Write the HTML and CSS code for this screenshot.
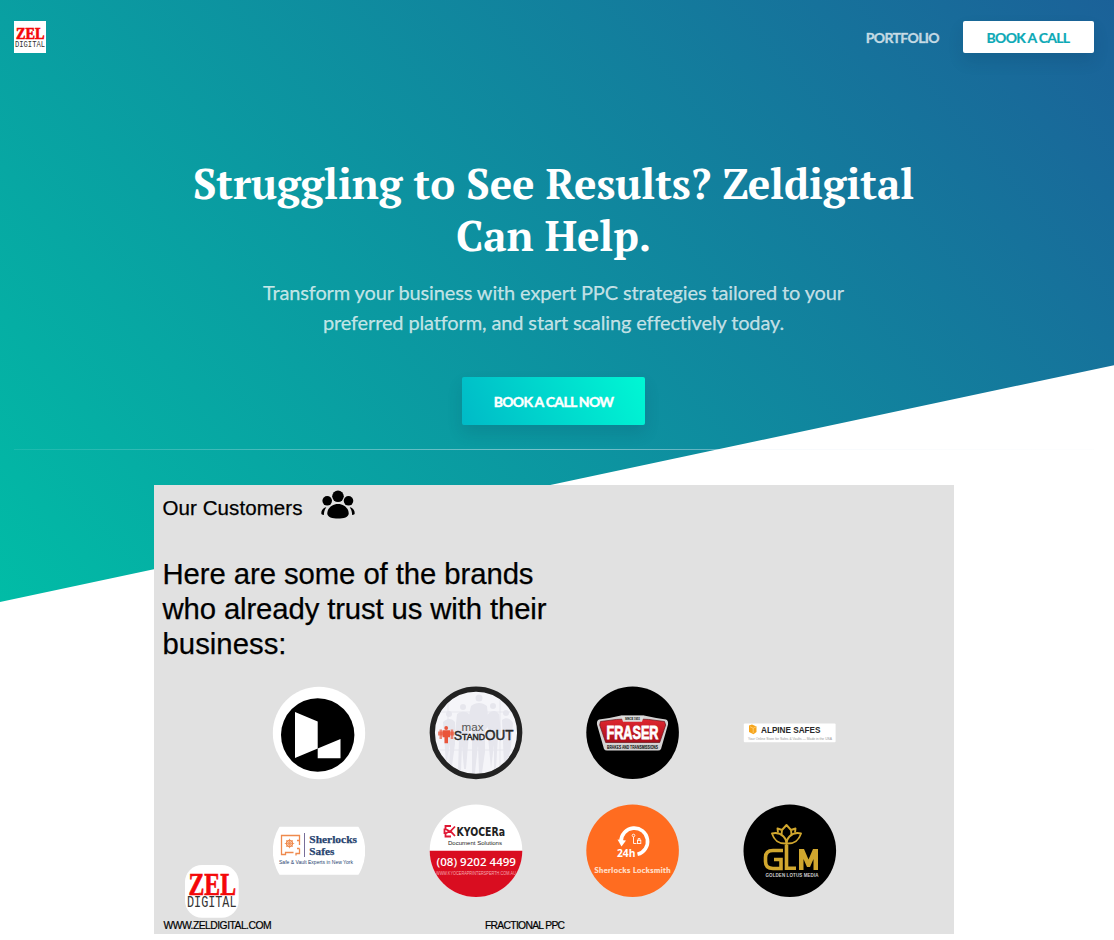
FILE: index.html
```html
<!DOCTYPE html>
<html lang="en">
<head>
<meta charset="utf-8">
<title>Zeldigital</title>
<link rel="stylesheet" href="styles.css">
</head>
<body>
<div class="page">
  <header class="site-header">
    <a class="brand" href="#" aria-label="Zel Digital">
      <svg width="32" height="32" viewBox="0 0 32 32">
        <rect width="32" height="32" fill="#fff"/>
        <text class="zel" x="2" y="17.800" font-size="17" textLength="28.500" lengthAdjust="spacingAndGlyphs">ZEL</text>
        <text class="digital" x="1" y="26" font-size="9" textLength="30" lengthAdjust="spacingAndGlyphs">DIGITAL</text>
      </svg>
    </a>
    <nav class="nav">
      <a class="nav-link" href="#">PORTFOLIO</a>
      <a class="button button-light" href="#">BOOK A CALL</a>
    </nav>
  </header>
  <main class="hero">
    <h1><span>Struggling to See Results? Zeldigital</span> <span>Can Help.</span></h1>
    <p>Transform your business with expert PPC strategies tailored to your preferred platform, and start scaling effectively today.</p>
    <a class="button button-primary" href="#">BOOK A CALL NOW</a>
    <div class="divider"></div>
    <svg class="customers" width="800" height="449" viewBox="154 485 800 449">
      <defs>
        <clipPath id="max-clip"><circle cx="476" cy="732.8" r="41"/></clipPath>
        <clipPath id="safes-clip"><rect x="273" y="826.8" width="92" height="48"/></clipPath>
        <clipPath id="kyo-clip"><circle cx="476" cy="850.7" r="46.3"/></clipPath>
        <linearGradient id="badge" x1="0" y1="0" x2="0" y2="1"><stop offset="0" stop-color="#e02730"/><stop offset="1" stop-color="#a80f1b"/></linearGradient>
      </defs>
      <rect x="154" y="485" width="800" height="449" fill="#e1e1e1"/>
      <text x="162.5" y="515" font-size="20.5" textLength="140" stroke="#000" stroke-width=".25">Our Customers</text>
      <g>
        <circle cx="327.2" cy="500.8" r="4.8"/><circle cx="348.5" cy="500.8" r="4.8"/>
        <circle cx="338" cy="496.3" r="5.8"/>
        <path d="M327.3 513.4c0-5.200 4.800-9.500 10.700-9.500s10.700 4.300 10.700 9.500c0 3.700-5 5.100-10.700 5.100s-10.700-1.400-10.700-5.100z"/>
        <path d="M326.300 507.200c-3 .400-5 3-5 6 0 1 .8 1.600 2.600 1.900 0-2.900.600-5.500 2.400-7.900zM349.700 507.200c3 .400 5 3 5 6 0 1-.8 1.600-2.600 1.900 0-2.900-.600-5.500-2.400-7.900z"/>
      </g>
      <g font-size="29.300" stroke="#000" stroke-width=".25">
        <text x="162.500" y="584" textLength="371">Here are some of the brands</text>
        <text x="162.500" y="619" textLength="384">who already trust us with their</text>
        <text x="162.500" y="654" textLength="124">business:</text>
      </g>

      <circle cx="319" cy="733" r="46.200" fill="#fff"/>
      <circle cx="317.700" cy="735" r="36.700"/>
      <path fill="#fff" d="M295 712l22.700 9.500v27L295 758zM317.700 748.500l22.800-9.500v19.300h-22.800z"/>

      <circle cx="476" cy="732.800" r="43.700" fill="#f6f6f9" stroke="#222" stroke-width="5.300"/>
      <g clip-path="url(#max-clip)" fill="#dcdce5" opacity=".6">
        <path d="M433 712h86M433 750h86M448 690v87M500 690v87" stroke="#dcdce5" fill="none"/>
        <circle cx="479" cy="698" r="3.500"/><path d="M471 706c5-4 11-4 16 0l2 20-4 4v22l-3 21h-3l-1-28-3 28h-3v-43l-5-6z"/>
        <circle cx="463" cy="707" r="3"/><path d="M457 714c4-3 9-3 12 0v20l-3 35h-2l-2-23-1 26h-3l1-34-4-5z"/>
        <circle cx="493" cy="706" r="3"/><path d="M488 714c4-4 8-4 11 0l2 18-3 4-2 33h-2v-24l-3 24-3-32z"/>
        <circle cx="449" cy="714" r="3"/><path d="M443 722c4-4 9-4 12 0v22l-3 22h-3l1-22-4 20z"/>
        <circle cx="506" cy="713" r="3"/><path d="M502 720c4-3 8-2 11 3l-2 24-4 18h-3z"/>
      </g>
      <g fill="#e9553b"><circle cx="446.200" cy="728" r="1.900"/><path d="M442.500 730.200h7.500v7h-2v6h-3.500v-6h-2z"/><path d="M439.500 729.500h2.500v9.500h-2.500zM450.700 729.500h2.500v9.500h-2.500z" opacity=".7"/><path d="M438 731.500h16v4h-16z" opacity=".7"/></g>
      <text x="461.500" y="731" font-size="10" fill="#555" textLength="22" lengthAdjust="spacingAndGlyphs">max</text>
      <g fill="#292929" stroke="#292929" stroke-width=".5">
        <text x="454" y="739.500" font-size="12.500" textLength="8" lengthAdjust="spacingAndGlyphs">S</text>
        <text x="462" y="739.500" font-size="9" textLength="23" lengthAdjust="spacingAndGlyphs">TAND</text>
        <text x="485" y="739.500" font-size="14" textLength="28.500" lengthAdjust="spacingAndGlyphs">OUT</text>
      </g>

      <circle cx="632.600" cy="732.800" r="46.300"/>
      <path d="M599 719.500q12-1.500 22-4h23q11 2.500 22 4 2.500 1 2 5l-7 24.500q-1 1.500-3 1.500h-51q-2 0-3-1.500l-7-24.500q-.500-4 2-5z" fill="#d5d3d3"/>
      <path d="M600.500 721.500q32-5.500 64 0l1.200 3.500-6 17.500h-54l-6-17.500z" fill="url(#badge)" stroke="#681118" stroke-width=".700"/>
      <path d="M621 715.800h23l-2 6h-19z" fill="#ddd"/>
      <text x="625" y="720.300" font-size="4" font-weight="bold" textLength="15" lengthAdjust="spacingAndGlyphs">SINCE 1951</text>
      <text x="606.500" y="739.300" font-size="18" font-weight="bold" fill="#fff" stroke="#fff" stroke-width=".8" textLength="52" lengthAdjust="spacingAndGlyphs">FRASER</text>
      <text x="607" y="748.500" font-size="4.500" font-weight="bold" textLength="51" lengthAdjust="spacingAndGlyphs">BRAKES AND TRANSMISSIONS</text>

      <rect x="743.800" y="723.500" width="91.800" height="18.800" rx="1" fill="#fff"/>
      <path d="M749 725.500l3-1 4.500 2v5.500l-3 2.300-4.500-2.300z" fill="#f6a51c"/><path d="M750 726.700l3.200 1.600v4.800M753.200 728.300l3-1.600" stroke="#ffd27d" stroke-width=".8" fill="none"/>
      <text x="761" y="732.800" font-size="8.600" font-weight="bold" fill="#292929" textLength="59.500" lengthAdjust="spacingAndGlyphs">ALPINE SAFES</text>
      <text x="748" y="739.500" font-size="3.700" fill="#999" textLength="84" lengthAdjust="spacingAndGlyphs">Your Online Store for Safes &amp; Vaults — Made in the USA</text>

      <circle cx="319" cy="850.800" r="46.200" fill="#fff" clip-path="url(#safes-clip)"/>
      <g fill="none" stroke="#ef8a4d" stroke-width="1.300">
        <path d="M296 855.500v-2h3.500v-5M299.500 845v-9.500h-18v19h4v-2h8M299.500 840.500h-2.500M299.500 848.500h-2.500"/>
        <circle cx="289.500" cy="843.500" r="3"/><path d="M289.500 838.800v9.400M284.800 843.500h9.400M286.200 840.200l6.600 6.600M292.800 840.200l-6.600 6.600" stroke-width=".8"/>
      </g>
      <path d="M304.500 833v24" stroke="#786e99"/>
      <g font-family="'Liberation Serif',serif" font-weight="bold" font-size="11" fill="#27446f" stroke="#27446f" stroke-width=".25">
        <text x="309.300" y="843.300" textLength="47.700" lengthAdjust="spacingAndGlyphs">Sherlocks</text>
        <text x="309.300" y="854.900" textLength="25" lengthAdjust="spacingAndGlyphs">Safes</text>
      </g>
      <text x="279" y="864" font-size="5" fill="#27446f" textLength="74" lengthAdjust="spacingAndGlyphs">Safe &amp; Vault Experts in New York</text>

      <rect x="185" y="865" width="53.700" height="52.800" rx="17" fill="#fff"/>
      <text class="zel" x="188.500" y="894.800" font-size="31" textLength="47.500" lengthAdjust="spacingAndGlyphs">ZEL</text>
      <text class="digital" x="187" y="907.300" font-size="16" textLength="49.500" lengthAdjust="spacingAndGlyphs">DIGITAL</text>

      <circle cx="476" cy="850.700" r="46.300" fill="#fff"/>
      <path d="M429 850.700h94V900h-94z" fill="#d90d20" clip-path="url(#kyo-clip)"/>
      <g fill="none" stroke="#df1733" stroke-width="1.800"><path d="M455 826.500l-4.500 4.700 4.500 4.800M451 826h-5.500v3l4 2.200-4 2.300v3h5.500M444.500 828.500v5.500"/></g>
      <text x="456.500" y="836.300" font-size="12" font-family="'DejaVu Sans',sans-serif" font-weight="bold" fill="#222" textLength="48.500" lengthAdjust="spacingAndGlyphs">KYOCERa</text>
      <text x="448" y="845" font-size="5.700" fill="#222" textLength="54" lengthAdjust="spacingAndGlyphs">Document Solutions</text>
      <text x="436.500" y="866" font-size="11.500" font-family="'Open Sans',sans-serif" font-weight="600" fill="#fff" textLength="79.500" lengthAdjust="spacingAndGlyphs">(08) 9202 4499</text>
      <text x="436" y="875" font-size="4.800" fill="#f5a9b0" textLength="80" lengthAdjust="spacingAndGlyphs" clip-path="url(#kyo-clip)">WWW.KYOCERAPRINTERSPERTH.COM.AU</text>

      <circle cx="632.600" cy="850.700" r="46.300" fill="#ff6c20"/>
      <path d="M621 841.500a13.300 13.300 0 1 1 16.500 12.800" fill="none" stroke="#fff" stroke-width="3.600"/>
      <path d="M617.500 839.500l8.500 1-4.500 6z" fill="#fff"/>
      <g fill="none" stroke="#fff" stroke-width=".9"><circle cx="633.500" cy="835.500" r="1.300"/><path d="M633.500 837v6.500h3"/><rect x="637.500" y="840.300" width="3.300" height="3.200"/><path d="M638.200 840v-1.500h1.800v1.500"/></g>
      <text x="617" y="857" font-size="10" font-family="'Open Sans',sans-serif" font-weight="bold" fill="#fff" textLength="18.500" lengthAdjust="spacingAndGlyphs">24h</text>
      <text x="594.500" y="872.800" font-size="7.500" font-family="Lato,sans-serif" font-weight="bold" fill="#ffe2d3" stroke="#ffe2d3" stroke-width=".2" textLength="76">Sherlocks Locksmith</text>

      <circle cx="789.800" cy="850.700" r="46.300"/>
      <g fill="none" stroke="#d1a72e" stroke-width="1.900" stroke-linejoin="round">
        <path d="M786.500 843.500c-8 .500-12-2.500-14.500-10 4-1 8.500 0 11.500 3 2 2 3 4 3 7zM786.500 843.500c8 .500 12-2.500 14.500-10-4-1-8.500 0-11.500 3-2 2-3 4-3 7z"/>
        <path d="M778 832.500l-.5-4 4.500 1.500 4.500-5 4.500 5 4.500-1.500-.5 4M782 830l-.5 4.500M791 830l.5 4.500"/>
        <path d="M786.500 843v7"/>
        <path d="M783 850.500h-10q-7.500 0-7.500 7v4q0 7 7.500 7h8v-9h-7" stroke-width="3.600" stroke-linejoin="miter"/>
        <path d="M786.500 845v23.300h9.500" stroke-width="3.600" stroke-linejoin="miter"/>
      </g>
      <path d="M799 870v-21h5l4.500 10.500 4.500-10.500h5v21h-4.500v-11l-3.500 8h-3l-3.500-8v11z" fill="#d1a72e"/>
      <text x="765.500" y="876.600" font-size="4.500" font-weight="bold" fill="#ccc" textLength="53">GOLDEN LOTUS MEDIA</text>

      <text x="163.500" y="928.500" font-size="10.300" textLength="108" stroke="#000" stroke-width=".2">WWW.ZELDIGITAL.COM</text>
      <text x="485" y="928.500" font-size="10.300" textLength="80" stroke="#000" stroke-width=".2">FRACTIONAL PPC</text>
    </svg>
  </main>
</div>
</body>
</html>
```

FILE: styles.css
```css
* { box-sizing: border-box; }

body {
  margin: 0;
  background: #fff;
  font-family: Lato, sans-serif;
}

.page {
  position: relative;
  height: 940px;
  padding: 0 20px 0 14px;
  overflow: hidden;
}

/* Slanted backdrop behind the header and hero */
.page::before {
  content: "";
  position: absolute;
  z-index: -1;
  top: 0;
  left: 0;
  right: 0;
  height: 601.6px;
  background: linear-gradient(54deg, #01bca6 0%, #1e5697 100%);
  transform: skewY(-12deg);
  transform-origin: 0 0;
}

a { text-decoration: none; }

.site-header {
  display: flex;
  align-items: center;
  justify-content: space-between;
  padding-top: 21px;
}

.brand, .brand svg { display: block; }

.nav {
  display: flex;
  align-items: center;
  gap: 24px;
}

.nav-link {
  padding-top: 1px;
  color: rgba(255, 255, 255, .72);
  font-size: 14px;
  font-weight: 700;
  line-height: 16px;
  letter-spacing: -.65px;
  -webkit-text-stroke: .4px rgba(255, 255, 255, .5);
}

.button {
  display: flex;
  align-items: center;
  justify-content: center;
  padding-top: 1px;
  border-radius: 2px;
  font-weight: 700;
  font-size: 14px;
  line-height: 16px;
  letter-spacing: -.7px;
  white-space: nowrap;
  box-shadow: 0 8px 16px rgba(12, 35, 60, .12);
}

.button-light {
  width: 131px;
  height: 32px;
  padding-right: 1px;
  background: #fff;
  color: #0ca9b6;
  -webkit-text-stroke: .2px #0ca9b6;
}

.button-primary {
  width: 183px;
  height: 48px;
  margin: 40px 1px 0 0;
  background: linear-gradient(65deg, #00bac7 0%, #00f7d4 100%);
  color: #fff;
  -webkit-text-stroke: .4px #fff;
}

.hero {
  display: flex;
  flex-direction: column;
  align-items: center;
  padding-top: 104px;
}

h1 {
  margin: 0 1px 0 0;
  color: #fff;
  font-family: "PT Serif", "Liberation Serif", serif;
  font-size: 42px;
  line-height: 52px;
  font-weight: 700;
  letter-spacing: -.1px;
  text-align: center;
}

h1 span { display: block; white-space: nowrap; }

.hero p {
  width: 620px;
  margin: 16px 1px 0 0;
  color: rgba(255, 255, 255, .74);
  font-size: 20px;
  line-height: 30px;
  letter-spacing: -.13px;
  text-align: center;
  -webkit-text-stroke: .25px rgba(255, 255, 255, .6);
}

.divider {
  width: 1080px;
  height: 1px;
  margin: 24px 0 35px;
  background: linear-gradient(90deg, rgba(231, 239, 247, .1), rgba(231, 239, 247, .5) 50%, rgba(231, 239, 247, .1));
}

.customers {
  display: block;
  font-family: "Liberation Sans", Arial, sans-serif;
}

.zel {
  fill: #f40808;
  font-family: "Liberation Serif", serif;
  font-weight: 700;
  stroke: #f40808;
  stroke-width: .7px;
}

.digital {
  fill: #333;
  font-family: "Liberation Mono", monospace;
}
```
